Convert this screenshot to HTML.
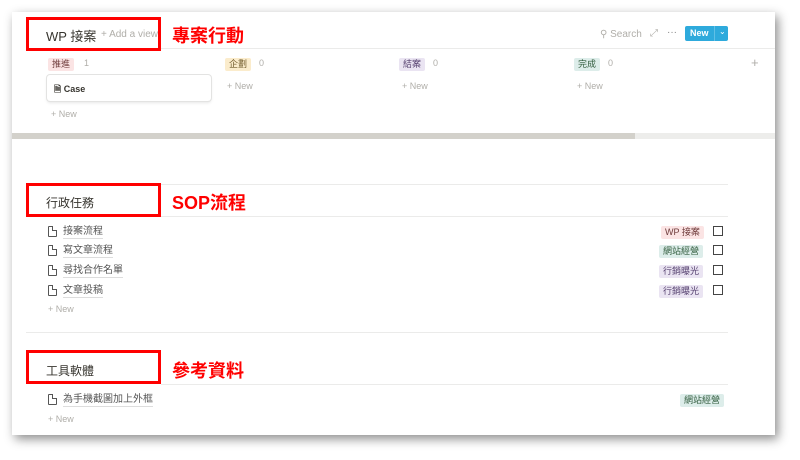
<!DOCTYPE html>
<html><head><meta charset="utf-8"><style>
*{margin:0;padding:0;box-sizing:border-box}
body{width:800px;height:460px;background:#fff;position:relative;overflow:hidden;font-family:"Liberation Sans","Noto Sans CJK TC",sans-serif;color:#37352f}
.card{position:absolute;left:12px;top:12px;width:763px;height:423px;background:#fff;box-shadow:3px 4px 10px rgba(0,0,0,.45)}
.a{position:absolute;white-space:nowrap}
.red{position:absolute;border:3px solid #f00}
.lbl{position:absolute;color:#f00;font-weight:bold;font-size:18px;white-space:nowrap}
.line{position:absolute;height:1px;background:#ebebea}
.tag{position:absolute;font-size:9px;padding:1px 4px;border-radius:2px;white-space:nowrap;line-height:11px}
.gray{color:#b0aea9;font-size:9px}
.doc{position:absolute;width:9px;height:11px;border:1.2px solid #555;border-radius:1px}
.doc:after{content:"";position:absolute;right:-1px;top:-1px;width:4px;height:4px;background:#fff;border-left:1px solid #555;border-bottom:1px solid #555}
.it{position:absolute;font-size:10px;color:#555;border-bottom:1px solid #ddd;line-height:12px}
.cb{position:absolute;width:10px;height:10px;border:1.5px solid #444}
</style></head><body>
<div class="card"></div>
<div class="red" style="left:26px;top:17px;width:135px;height:34px"></div>
<div class="a" style="left:46px;top:26px;font-size:13px">WP 接案</div>
<div class="a gray" style="left:101px;top:29px;font-size:10px">+ Add a view</div>
<div class="lbl" style="left:172px;top:22px">專案行動</div>
<div class="line" style="left:161px;top:48px;width:614px"></div>
<div class="a gray" style="left:600px;top:29px;font-size:10px">⚲ Search</div>
<div class="a gray" style="left:650px;top:28px;font-size:10px">⤢</div>
<div class="a" style="left:667px;top:27px;font-size:10px;color:#888">···</div>
<div class="a" style="left:685px;top:26px;width:43px;height:15px;background:#2eaadc;border-radius:2px;color:#fff;font-size:9px;font-weight:bold;padding:2px 0 0 5px">New<span style="position:absolute;left:29px;top:0;height:15px;border-left:1px solid #60c0e6;padding:1px 0 0 4px;font-weight:normal;font-size:8px">⌄</span></div>
<div class="tag" style="left:48px;top:58px;background:#fbe4e4;color:#6f3b3b">推進</div><div class="a gray" style="left:84px;top:58px">1</div>
<div class="tag" style="left:225px;top:58px;background:#fbeccc;color:#6f5a2b">企劃</div><div class="a gray" style="left:259px;top:58px">0</div>
<div class="tag" style="left:399px;top:58px;background:#eae4f2;color:#55406f">結案</div><div class="a gray" style="left:433px;top:58px">0</div>
<div class="tag" style="left:574px;top:58px;background:#ddedea;color:#2f5a3b">完成</div><div class="a gray" style="left:608px;top:58px">0</div>
<div class="a gray" style="left:751px;top:55px;font-size:13px">+</div>
<div class="a" style="left:47px;top:75px;width:164px;height:26px;border-radius:3px;box-shadow:0 0 0 1px #e3e3e2,0 2px 3px rgba(0,0,0,.1)"></div>
<div class="a" style="left:54px;top:82px;font-size:9px;font-weight:bold">🗎 Case</div>
<div class="a gray" style="left:51px;top:109px">+ New</div>
<div class="a gray" style="left:227px;top:81px">+ New</div>
<div class="a gray" style="left:402px;top:81px">+ New</div>
<div class="a gray" style="left:577px;top:81px">+ New</div>
<div class="a" style="left:12px;top:133px;width:763px;height:6px;background:#ededeb"></div>
<div class="a" style="left:12px;top:133px;width:623px;height:6px;background:#d3d1cb"></div>

<div class="line" style="left:26px;top:184px;width:702px"></div>
<div class="red" style="left:26px;top:183px;width:135px;height:34px"></div>
<div class="a" style="left:46px;top:194px;font-size:12px">行政任務</div>
<div class="lbl" style="left:172px;top:189px">SOP流程</div>
<div class="line" style="left:161px;top:216px;width:567px"></div>
<div class="doc" style="left:48px;top:226px"></div><div class="it" style="left:63px;top:226px">接案流程</div>
<div class="doc" style="left:48px;top:245px"></div><div class="it" style="left:63px;top:245px">寫文章流程</div>
<div class="doc" style="left:48px;top:265px"></div><div class="it" style="left:63px;top:265px">尋找合作名單</div>
<div class="doc" style="left:48px;top:285px"></div><div class="it" style="left:63px;top:285px">文章投稿</div>
<div class="tag" style="left:661px;top:226px;background:#fbe4e4;color:#6f3b3b">WP 接案</div>
<div class="tag" style="left:659px;top:245px;background:#ddedea;color:#2f5a3b">網站經營</div>
<div class="tag" style="left:659px;top:265px;background:#eae4f2;color:#55406f">行銷曝光</div>
<div class="tag" style="left:659px;top:285px;background:#eae4f2;color:#55406f">行銷曝光</div>
<div class="cb" style="left:713px;top:226px"></div>
<div class="cb" style="left:713px;top:245px"></div>
<div class="cb" style="left:713px;top:265px"></div>
<div class="cb" style="left:713px;top:285px"></div>
<div class="a gray" style="left:48px;top:304px">+ New</div>

<div class="line" style="left:26px;top:332px;width:702px"></div>
<div class="red" style="left:26px;top:350px;width:135px;height:34px"></div>
<div class="a" style="left:46px;top:362px;font-size:12px">工具軟體</div>
<div class="lbl" style="left:172px;top:357px">參考資料</div>
<div class="line" style="left:161px;top:384px;width:567px"></div>
<div class="doc" style="left:48px;top:394px"></div><div class="it" style="left:63px;top:394px">為手機截圖加上外框</div>
<div class="tag" style="left:680px;top:394px;background:#ddedea;color:#2f5a3b">網站經營</div>
<div class="a gray" style="left:48px;top:414px">+ New</div>
</body></html>
